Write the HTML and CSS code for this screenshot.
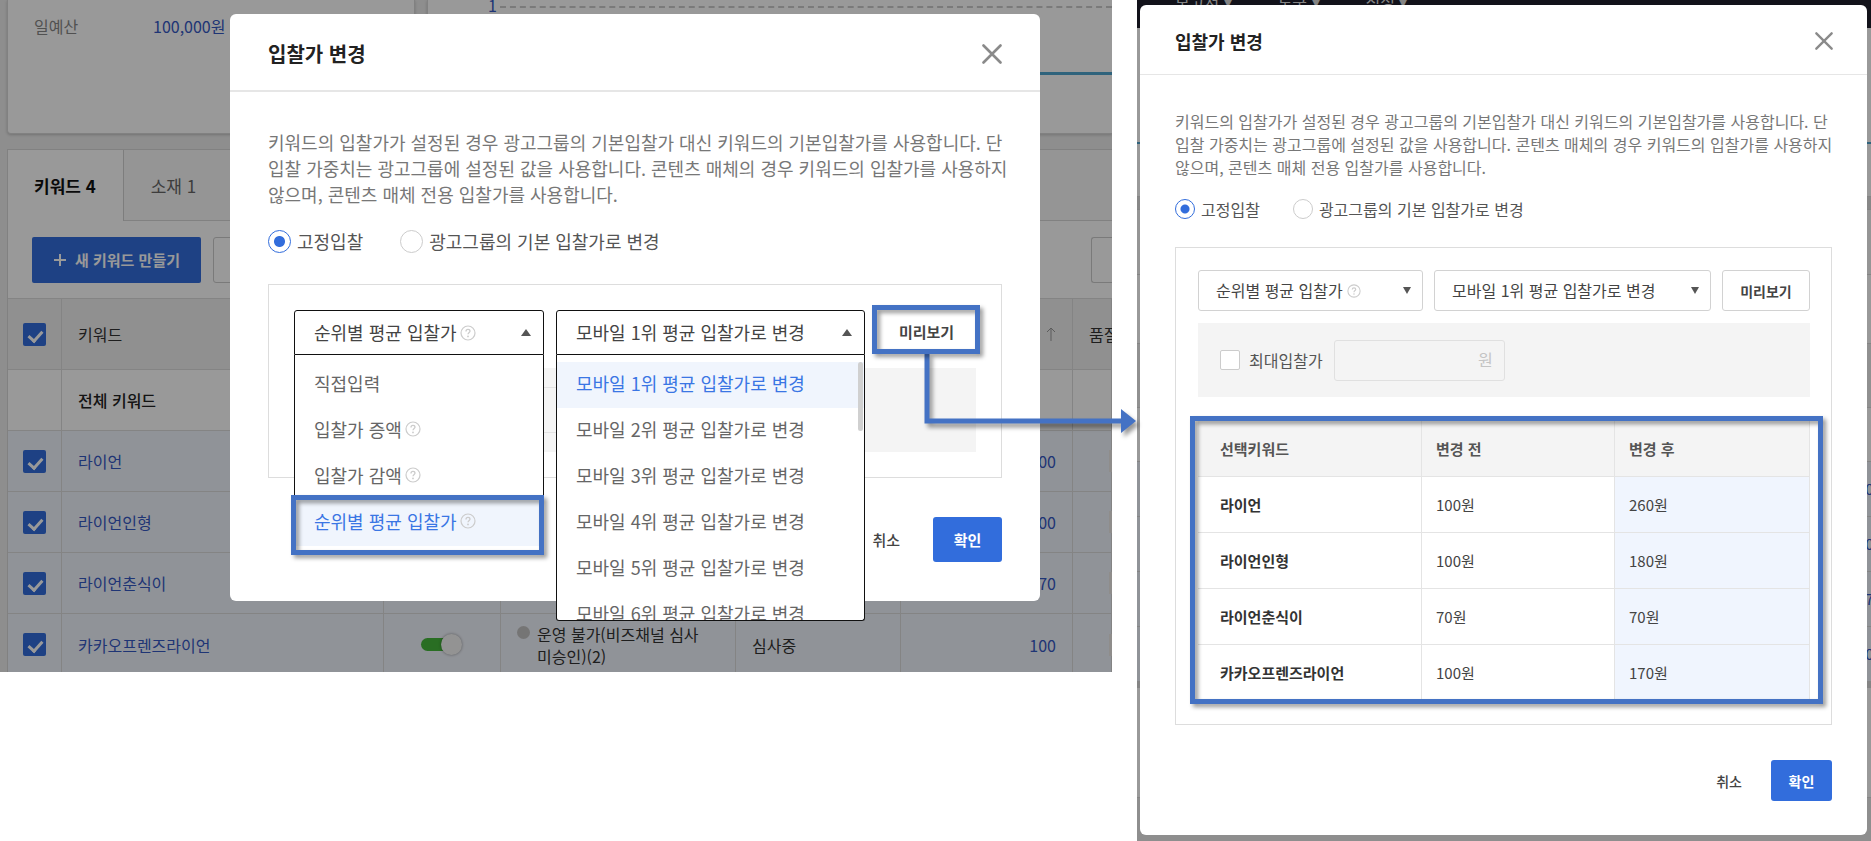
FILE: index.html
```html
<!DOCTYPE html>
<html lang="ko">
<head>
<meta charset="utf-8">
<title>입찰가 변경</title>
<link rel="stylesheet" href="styles.css">
</head>
<body>
<svg class="defs" aria-hidden="true">
  <symbol id="help" viewBox="0 0 16 16">
    <circle cx="8" cy="8" r="7" fill="none" stroke="currentColor" stroke-width="1.2"/>
    <path d="M6 6.4C6 5.1 6.8 4.4 8 4.4S10 5.1 10 6.2C10 7.4 8 7.6 8 9.3" fill="none" stroke="currentColor" stroke-width="1.3"/>
    <circle cx="8" cy="11.4" r=".9" fill="currentColor"/>
  </symbol>
  <symbol id="close" viewBox="0 0 20 20">
    <path d="M1.5 1.5l17 17M18.5 1.5l-17 17" fill="none" stroke="currentColor" stroke-width="2.6" stroke-linecap="round"/>
  </symbol>
</svg>
<main class="stage">
  <section class="shot shot-before">
    <div class="console">
      <div class="cards">
        <div class="card summary"><span class="summary-label">일예산</span><span class="link">100,000원</span></div>
        <div class="card chart">
          <div class="axis"><span class="link">1</span><i class="grid-line"></i></div>
          <div class="series"></div>
        </div>
      </div>
      <div class="board">
        <nav class="tabs"><a class="tab active" href="#k">키워드 4</a><a class="tab" href="#c">소재 1</a></nav>
        <div class="toolbar">
          <button class="create" type="button"><svg width="14" height="14" viewBox="0 0 14 14"><path d="M7 1v12M1 7h12" stroke="#fff" stroke-width="2"/></svg>새 키워드 만들기</button>
          <button class="outline" type="button" aria-label="변경"></button>
          <button class="outline last" type="button" aria-label="다운로드"></button>
        </div>
        <table class="keywords">
          <colgroup><col class="c-check"><col class="c-name"><col class="c-switch"><col class="c-state"><col class="c-review"><col class="c-bid"><col></colgroup>
          <thead><tr><th><input type="checkbox" class="check" checked aria-label="전체 선택"></th><th>키워드</th><th></th><th></th><th></th><th class="num"><svg width="10" height="14" viewBox="0 0 10 14"><path d="M5 14V1M1 5l4-4 4 4" fill="none" stroke="#999"/></svg></th><th>품질지수</th></tr></thead>
          <tbody>
            <tr class="total"><td></td><td>전체 키워드</td><td></td><td></td><td></td><td></td><td></td></tr>
            <tr><td><input type="checkbox" class="check" checked aria-label="라이언"></td><td class="link">라이언</td><td></td><td></td><td></td><td class="num link">100</td><td><i class="quality"></i></td></tr>
            <tr><td><input type="checkbox" class="check" checked aria-label="라이언인형"></td><td class="link">라이언인형</td><td></td><td></td><td></td><td class="num link">100</td><td><i class="quality"></i></td></tr>
            <tr><td><input type="checkbox" class="check" checked aria-label="라이언춘식이"></td><td class="link">라이언춘식이</td><td></td><td></td><td></td><td class="num link">70</td><td><i class="quality"></i></td></tr>
            <tr class="cut"><td><input type="checkbox" class="check" checked aria-label="카카오프렌즈라이언"></td><td class="link">카카오프렌즈라이언</td><td><span class="switch"><i></i></span></td><td class="state-cell"><span class="state"><i class="dot"></i><span>운영 불가(비즈채널 심사<br>미승인)(2)</span></span></td><td class="review">심사중</td><td class="num link">100</td><td><i class="quality"></i></td></tr>
          </tbody>
        </table>
      </div>
      <div class="dim"></div>
    </div>

    <div class="layer">
      <section class="modal large">
        <header class="modal-head"><h2>입찰가 변경</h2><button class="close" type="button" aria-label="닫기"><svg><use href="#close"/></svg></button></header>
        <div class="modal-body">
          <p class="guide">키워드의 입찰가가 설정된 경우 광고그룹의 기본입찰가 대신 키워드의 기본입찰가를 사용합니다. 단<br>입찰 가중치는 광고그룹에 설정된 값을 사용합니다. 콘텐츠 매체의 경우 키워드의 입찰가를 사용하지<br>않으며, 콘텐츠 매체 전용 입찰가를 사용합니다.</p>
          <div class="radios">
            <label><input type="radio" name="mode-a" checked>고정입찰</label>
            <label><input type="radio" name="mode-a">광고그룹의 기본 입찰가로 변경</label>
          </div>
          <div class="panel">
            <div class="controls">
              <div class="picker open">
                <select aria-label="변경 방식"><option>순위별 평균 입찰가</option></select>
                <svg class="help picker-help"><use href="#help"/></svg>
                <ul class="menu">
                  <li>직접입력</li>
                  <li>입찰가 증액<svg class="help"><use href="#help"/></svg></li>
                  <li>입찰가 감액<svg class="help"><use href="#help"/></svg></li>
                  <li class="current">순위별 평균 입찰가<svg class="help"><use href="#help"/></svg><i class="mark mark-item"></i></li>
                </ul>
              </div>
              <div class="picker open">
                <select aria-label="순위"><option>모바일 1위 평균 입찰가로 변경</option></select>
                <ul class="menu ranks">
                  <li class="current">모바일 1위 평균 입찰가로 변경</li>
                  <li>모바일 2위 평균 입찰가로 변경</li>
                  <li>모바일 3위 평균 입찰가로 변경</li>
                  <li>모바일 4위 평균 입찰가로 변경</li>
                  <li>모바일 5위 평균 입찰가로 변경</li>
                  <li>모바일 6위 평균 입찰가로 변경</li>
                </ul>
                <i class="thumb"></i>
              </div>
              <div class="preview">
                <button class="preview-button" type="button">미리보기</button>
                <i class="mark mark-preview"></i>
                <svg class="connector" viewBox="0 0 220 90"><path d="M7 0V68H204" fill="none" stroke="#4472c4" stroke-width="5"/><path d="M201 56l15 12-15 12z" fill="#4472c4"/></svg>
              </div>
            </div>
            <div class="limit"><span class="limit-row"></span></div>
          </div>
          <footer class="modal-foot"><button class="cancel" type="button">취소</button><button class="ok" type="button">확인</button></footer>
        </div>
      </section>
    </div>
  </section>

  <section class="shot shot-after">
    <div class="backdrop">
      <nav class="top-nav"><span>보고서 ▾</span><span>도구 ▾</span><span>직정 ▾</span></nav>
      <div class="strip strip-chart"><i></i></div>
      <div class="strip strip-gap"></div>
      <div class="strip strip-tabs"></div>
      <div class="strip strip-tools"></div>
      <div class="strip strip-head"></div>
      <div class="strip strip-total"></div>
      <div class="strip strip-row"><span>100</span></div>
      <div class="strip strip-row"><span>100</span></div>
      <div class="strip strip-row"><span>70</span></div>
      <div class="strip strip-row"><span>100</span></div>
      <div class="strip strip-scroll"></div>
      <div class="strip strip-foot"></div>
      <div class="dim"></div>
    </div>
    <section class="modal small">
      <header class="modal-head"><h2>입찰가 변경</h2><button class="close" type="button" aria-label="닫기"><svg><use href="#close"/></svg></button></header>
      <div class="modal-body">
        <p class="guide">키워드의 입찰가가 설정된 경우 광고그룹의 기본입찰가 대신 키워드의 기본입찰가를 사용합니다. 단<br>입찰 가중치는 광고그룹에 설정된 값을 사용합니다. 콘텐츠 매체의 경우 키워드의 입찰가를 사용하지<br>않으며, 콘텐츠 매체 전용 입찰가를 사용합니다.</p>
        <div class="radios">
          <label><input type="radio" name="mode-b" checked>고정입찰</label>
          <label><input type="radio" name="mode-b">광고그룹의 기본 입찰가로 변경</label>
        </div>
        <div class="panel">
          <div class="controls">
            <div class="picker">
              <select aria-label="변경 방식"><option>순위별 평균 입찰가</option></select>
              <svg class="help picker-help"><use href="#help"/></svg>
            </div>
            <div class="picker"><select aria-label="순위"><option>모바일 1위 평균 입찰가로 변경</option></select></div>
            <button class="preview-button" type="button">미리보기</button>
          </div>
          <div class="limit">
            <label class="limit-label"><input type="checkbox" class="check plain">최대입찰가</label>
            <span class="amount"><input type="text" aria-label="최대입찰가 금액" disabled><span>원</span></span>
          </div>
          <div class="result">
            <table class="changes">
              <colgroup><col class="c-key"><col class="c-old"><col class="c-new"></colgroup>
              <thead><tr><th>선택키워드</th><th>변경 전</th><th>변경 후</th></tr></thead>
              <tbody>
                <tr><th>라이언</th><td>100원</td><td>260원</td></tr>
                <tr><th>라이언인형</th><td>100원</td><td>180원</td></tr>
                <tr><th>라이언춘식이</th><td>70원</td><td>70원</td></tr>
                <tr><th>카카오프렌즈라이언</th><td>100원</td><td>170원</td></tr>
              </tbody>
            </table>
            <i class="mark mark-result"></i>
          </div>
        </div>
        <footer class="modal-foot"><button class="cancel" type="button">취소</button><button class="ok" type="button">확인</button></footer>
      </div>
    </section>
  </section>
</main>
</body>
</html>
```
FILE: styles.css
```css
* { box-sizing: border-box; }

body {
  margin: 0;
  background: #fff;
  color: #333;
  font: 16px/22px "Noto Sans CJK KR", "Noto Sans", sans-serif;
}

button, select, input { font: inherit; color: inherit; margin: 0; }
button { padding: 0; border: 0; background: none; cursor: pointer; }
a { color: inherit; text-decoration: none; }
h2, p, ul { margin: 0; padding: 0; }
li { list-style: none; }
.defs { position: absolute; width: 0; height: 0; }

.stage {
  display: grid;
  grid-template-columns: 1112fr 734fr;
  column-gap: 25px;
  align-items: start;
}
.shot { position: relative; min-width: 0; }
.shot-before { z-index: 1; }
.dim { position: absolute; inset: 0; background: rgba(0, 0, 0, .4); }

/* Campaign console behind the first dialog */
.console {
  position: relative;
  overflow: hidden;
  padding-left: 7px;
  background: #ededed;
}
.link { color: #3559c4; }
.cards { display: grid; grid-template-columns: 408px 1fr; gap: 12px; margin-bottom: 15px; }
.card {
  height: 134px;
  border: 1px solid #d8d8d8;
  border-top: 0;
  border-radius: 0 0 4px 4px;
  background: #fff;
  box-shadow: 0 1px 3px rgba(0, 0, 0, .2);
}
.summary { display: flex; padding: 15px 26px; }
.summary-label { width: 119px; color: #888; }
.chart { border-right: 0; border-radius: 0; }
.axis { display: flex; align-items: center; gap: 3px; height: 13px; padding-left: 60px; line-height: 12px; }
.axis span { margin-bottom: 3px; }
.grid-line { flex: 1; border-top: 2px dashed #ccc; }
.series { margin-top: 59px; border-top: 3px solid #4fa5cf; }

.board { border-left: 1px solid #d8d8d8; background: #fff; }
.tabs {
  display: flex;
  height: 72px;
  border-top: 1px solid #d8d8d8;
  background: #f8f8f8;
  box-shadow: inset 0 -1px #d8d8d8;
}
.tab {
  display: flex;
  align-items: center;
  padding: 0 27px;
  font-size: 17px;
  color: #666;
}
.tab.active {
  padding: 0 27px 0 26px;
  border-right: 1px solid #d0d0d0;
  background: #fff;
  font-weight: 700;
  color: #111;
}
.toolbar { display: flex; gap: 12px; height: 77px; padding: 16px 0 15px 24px; }
.create {
  display: flex;
  align-items: center;
  justify-content: center;
  gap: 8px;
  width: 169px;
  border-radius: 2px;
  background: #326ddc;
  color: #fff;
  font-size: 15px;
  font-weight: 700;
}
.outline { width: 120px; border: 1px solid #ccc; border-radius: 3px; }
.outline.last { width: 21px; margin-left: auto; border-right: 0; border-radius: 3px 0 0 3px; }

.keywords { width: 100%; table-layout: fixed; border-collapse: separate; border-spacing: 0; white-space: nowrap; }
.c-check { width: 54px; }
.c-name { width: 322px; }
.c-switch { width: 117px; }
.c-state { width: 235px; }
.c-review { width: 165px; }
.c-bid { width: 172px; }
.keywords th, .keywords td {
  height: 61px;
  padding: 0 16px;
  border-right: 1px solid #ddd;
  border-bottom: 1px solid #ddd;
  background: #f1f5fd;
  text-align: left;
  vertical-align: middle;
  font-weight: 400;
}
.keywords th { height: 72px; border-top: 1px solid #ddd; background: #f0f0f1; }
.keywords th:first-child, .keywords td:first-child { padding-left: 15px; }
.keywords .total td { background: #fff; font-weight: 500; color: #222; }
.keywords .cut td { height: 58px; padding-top: 3px; border-bottom: 0; }
.keywords .num { text-align: right; }
.quality { display: block; width: 20px; height: 22px; margin-left: 20px; background: #eeebe8; }
.check {
  appearance: none;
  display: block;
  position: relative;
  width: 23px;
  height: 23px;
  border-radius: 2px;
  background: #326ddc;
}
.check:checked::after {
  content: "";
  position: absolute;
  left: 8px;
  top: 5px;
  width: 6px;
  height: 11px;
  border: solid #fff;
  border-width: 0 3px 3px 0;
  transform: rotate(42deg);
}
.switch { position: relative; display: block; width: 34px; height: 13px; margin-left: 21px; border-radius: 7px; background: #45b73b; }
.switch i {
  position: absolute;
  right: -7px;
  top: -4px;
  width: 21px;
  height: 21px;
  border-radius: 50%;
  background: #f6f6f6;
  box-shadow: 0 0 3px rgba(0, 0, 0, .4);
}
.state { display: flex; gap: 7px; }
.dot { width: 13px; height: 13px; margin-top: 3px; border-radius: 50%; background: #c4c4c4; }

/* Dialogs */
.layer { position: absolute; top: 14px; left: 0; right: 0; padding: 0 72px 0 230px; }
.modal { position: relative; border-radius: 6px; background: #fff; }
.modal-head {
  display: flex;
  align-items: center;
  justify-content: space-between;
  height: 78px;
  padding: 4px 38px 0;
  border-bottom: 2px solid #e6e6e6;
}
.modal-head h2 { font-size: 20px; font-weight: 700; line-height: 30px; color: #222; }
.close svg { display: block; width: 20px; height: 20px; color: #8a8a8a; }
.modal-body { padding: 37px 38px 39px; }
.guide { font-size: 18px; line-height: 26px; color: #777; white-space: nowrap; }
.radios { display: flex; gap: 37px; margin: 23px 0 31px; font-size: 18px; line-height: 23px; color: #555; }
.radios label { display: flex; align-items: center; gap: 6px; }
.radios input {
  appearance: none;
  width: 23px;
  height: 23px;
  border: 1px solid #ccc;
  border-radius: 50%;
  background: #fff;
}
.radios input:checked { border-color: #326ddc; background: radial-gradient(circle, #326ddc 5px, #fff 6px); }
.panel { padding: 25px; border: 1px solid #ddd; }
.controls { display: grid; grid-template-columns: 250fr 309fr 99fr; column-gap: 12px; height: 45px; margin-bottom: 13px; }
.picker { position: relative; font-size: 18px; color: #444; }
.picker select {
  appearance: none;
  display: block;
  width: 100%;
  height: 100%;
  padding: 0 19px 2px;
  border: 1px solid #d2d2d2;
  border-radius: 3px;
  background: #fff;
}
.picker::after {
  content: "";
  position: absolute;
  right: 13px;
  top: 19px;
  border: solid transparent;
  border-width: 7px 5px 0;
  border-top-color: #555;
}
.picker.open select { border-color: #111; border-radius: 3px 3px 0 0; }
.picker.open::after { border-width: 0 5px 7px; border-bottom-color: #555; }
.help { width: 16px; height: 16px; color: #ccc; }
.picker-help { position: absolute; left: 166px; top: 15px; }
.menu {
  position: absolute;
  z-index: 2;
  top: 100%;
  left: 0;
  right: 0;
  padding: 7px 0;
  border: 1px solid #111;
  border-top: 0;
  border-radius: 0 0 3px 3px;
  background: #fff;
  color: #666;
}
.menu li {
  position: relative;
  display: flex;
  align-items: center;
  gap: 3px;
  height: 46px;
  padding: 0 19px 5px;
  line-height: 26px;
  white-space: nowrap;
}
.menu .current { background: #f0f5fd; color: #3a76e4; }
.ranks { height: 266px; overflow: hidden; }
.thumb { position: absolute; z-index: 3; right: 2px; top: 52px; width: 5px; height: 69px; border-radius: 3px; background: #d0d0d0; }
.mark {
  position: absolute;
  z-index: 3;
  border: 5px solid #4472c4;
  filter: drop-shadow(3px 3px 2px rgba(0, 0, 0, .4));
}
.mark-item { inset: -5px -1px -9px -4px; }
.mark-preview { inset: -5px -4px 1px -5px; }
.mark-result { inset: -5px -13px -3px -8px; }
.preview { position: relative; display: grid; }
.preview-button {
  border: 1px solid #d2d2d2;
  border-radius: 3px;
  background: #fff;
  color: #444;
  font-size: 15px;
  font-weight: 700;
}
.preview .preview-button { padding-bottom: 2px; border-color: transparent; }
.connector {
  position: absolute;
  z-index: 2;
  top: 43px;
  left: 43px;
  width: 220px;
  height: 90px;
  filter: drop-shadow(3px 4px 2px rgba(0, 0, 0, .4));
}
.limit { display: flex; align-items: center; min-height: 84px; background: #f4f4f4; }
.limit-row { width: 345px; height: 46px; margin-left: 152px; border: 1px solid #e2e2e2; }
.modal-foot { display: flex; align-items: center; justify-content: flex-end; gap: 33px; margin-top: 39px; color: #444; font-size: 15px; font-weight: 500; }
.ok { width: 69px; height: 45px; border-radius: 3px; background: #326ddc; color: #fff; font-weight: 700; }

/* Second dialog, smaller scale */
.shot-after { min-height: 100vh; padding: 5px 4px 7px 3px; }
.backdrop { position: absolute; inset: 0; overflow: hidden; background: #ededed; }
.top-nav { display: flex; gap: 46px; height: 28px; padding-left: 38px; background: #1e1e2c; color: #ddd; line-height: 2px; }
.strip { border-bottom: 1px solid #ddd; background: #fff; }
.strip-chart { height: 169px; padding-top: 114px; }
.strip-chart i { display: block; border-top: 2px solid #4fa5cf; }
.strip-gap { height: 13px; background: #e2e2e2; }
.strip-tabs { height: 65px; background: #f8f8f8; }
.strip-tools { height: 69px; }
.strip-head { height: 64px; background: #f0f0f1; }
.strip-total { height: 54px; }
.strip-row { display: flex; align-items: center; justify-content: flex-end; height: 55px; background: #f1f5fd; color: #3559c4; font-size: 15px; }
.strip-row span { margin-right: -11px; }
.strip-scroll { height: 6px; background: #ddd; }
.strip-foot { height: 110px; }

.small .modal-head { height: 70px; padding: 2px 34px 0 35px; border-width: 1px; }
.small h2 { font-size: 18px; }
.small .close svg { width: 18px; height: 18px; }
.small .modal-body { padding: 35px 35px 34px; }
.small .guide { font-size: 16px; line-height: 23px; }
.small .radios { gap: 33px; margin: 20px 0 28px; font-size: 16px; line-height: 20px; }
.small .radios input { width: 20px; height: 20px; }
.small .radios input:checked { background: radial-gradient(circle, #326ddc 4px, #fff 5px); }
.small .panel { padding: 22px 21px 23px 22px; }
.small .controls { grid-template-columns: 225fr 277fr 88fr; column-gap: 11px; height: 41px; margin-bottom: 12px; }
.small .picker { font-size: 16px; }
.small .picker select { padding: 0 17px 2px; }
.small .picker::after { right: 12px; top: 17px; border-width: 7px 4px 0; }
.small .help { width: 14px; height: 14px; }
.small .picker-help { left: 149px; top: 14px; }
.small .preview-button, .small .modal-foot { font-size: 14px; }
.small .limit { min-height: 74px; margin-bottom: 24px; padding-left: 22px; gap: 11px; color: #555; }
.limit-label { display: flex; align-items: center; gap: 9px; }
.check.plain { width: 20px; height: 20px; border: 1px solid #ccc; background: #fff; }
.amount { position: relative; width: 171px; }
.amount input { display: block; width: 100%; height: 41px; padding: 0 30px 0 10px; border: 1px solid #e0e0e0; border-radius: 3px; background: transparent; }
.amount span { position: absolute; right: 12px; top: 8px; color: #c4c4c4; }
.result { position: relative; }
.changes { width: 100%; table-layout: fixed; border-collapse: separate; border-spacing: 0; font-size: 15px; color: #444; }
.c-key { width: 224px; }
.c-old { width: 193px; }
.changes th, .changes td {
  height: 56px;
  padding: 0 14px;
  border-right: 1px solid #e4e4e4;
  border-bottom: 1px solid #e4e4e4;
  text-align: left;
  font-weight: 400;
}
.changes th { font-weight: 700; color: #333; }
.changes thead th { background: #f4f4f4; color: #555; }
.changes th:first-child { padding-left: 22px; }
.changes td:last-child { background: #f0f5fe; }
.small .modal-foot { gap: 29px; margin-top: 35px; }
.small .ok { width: 61px; height: 41px; }
```
